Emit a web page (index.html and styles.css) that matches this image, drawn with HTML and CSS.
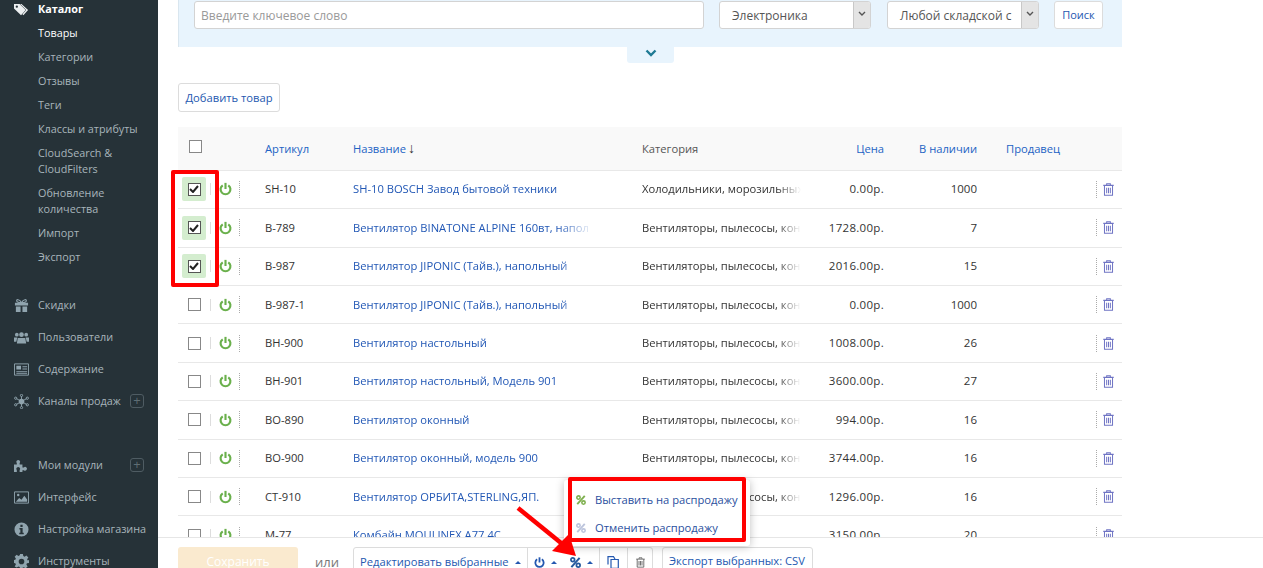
FILE: index.html
```html
<!DOCTYPE html>
<html lang="ru">
<head>
<meta charset="utf-8">
<title>Товары</title>
<link rel="stylesheet" href="styles.css">
</head>
<body>
<svg class="defs" width="0" height="0" aria-hidden="true">
  <symbol id="power" viewBox="0 0 14 14"><path d="M4 3A5.300 5.300 0 1 0 10 3" fill="none" stroke="currentColor" stroke-width="2.300"/><path d="M7 .4V7" fill="none" stroke="currentColor" stroke-width="2.300"/></symbol>
  <symbol id="trash" viewBox="0 0 12 14"><path d="M4 2V.8h4V2M.3 2.500h11.400M1.600 2.500v10.700h8.800V2.500" fill="none" stroke="currentColor" stroke-width="1.100"/><path d="M4 5v6M6 5v6M8 5v6" fill="none" stroke="currentColor" stroke-width="1.100"/></symbol>
  <symbol id="percent" viewBox="0 0 12 12"><circle cx="3" cy="3" r="2" fill="none" stroke="currentColor" stroke-width="1.900"/><circle cx="9" cy="9" r="2" fill="none" stroke="currentColor" stroke-width="1.900"/><path d="M10.500 1 1.500 11" stroke="currentColor" stroke-width="2.200"/></symbol>
</svg>
<div class="app">
  <aside class="sidebar">
    <div class="nav-head">
      <svg class="nav-icon" viewBox="0 0 16 14"><path d="M0 1h6l6.500 6.500-5 5.500L0 6z" fill="#eceff1"/><path d="M8 1l7 6.500-5 5.500-1-1 4-4.500L6.500 1z" fill="#eceff1"/><circle cx="3" cy="4" r="1.200" fill="#263238"/></svg>
      <span>Каталог</span>
    </div>
    <ul class="subnav">
      <li class="current">Товары</li>
      <li>Категории</li>
      <li>Отзывы</li>
      <li>Теги</li>
      <li>Классы и атрибуты</li>
      <li>CloudSearch &amp; CloudFilters</li>
      <li>Обновление количества</li>
      <li>Импорт</li>
      <li>Экспорт</li>
    </ul>
    <ul class="nav nav-first">
      <li><svg class="nav-icon" viewBox="0 0 16 14"><path d="M1 4h14v3H1zM2 8h5v6H2zM9 8h5v6H9z" fill="#90a4ae"/><path d="M8 4C6 0 2 0 3 2.500 3.500 4 6 4 8 4c2 0 4.500 0 5-1.500C14 0 10 0 8 4z" fill="none" stroke="#90a4ae" stroke-width="1.200"/></svg><span>Скидки</span></li>
      <li><svg class="nav-icon" viewBox="0 0 16 13"><circle cx="8" cy="3.500" r="2.500" fill="#90a4ae"/><circle cx="3" cy="3.500" r="2" fill="#90a4ae"/><circle cx="13" cy="3.500" r="2" fill="#90a4ae"/><path d="M4 7h8l1 6H3zM0 6.500h3.500L2.500 11H0zM12.500 6.500H16V11h-2.500z" fill="#90a4ae"/></svg><span>Пользователи</span></li>
      <li><svg class="nav-icon" viewBox="0 0 16 13"><path d="M.5.500h15v12H.5z" fill="none" stroke="#90a4ae"/><path d="M2.500 2.500h5v4h-5zM9 3h5v1H9zM9 5.500h5v1H9zM2.500 8h11.500v1H2.500zM2.500 10h11.500v1H2.500z" fill="#90a4ae"/></svg><span>Содержание</span></li>
      <li><svg class="nav-icon" viewBox="0 0 16 16"><circle cx="8" cy="8" r="3" fill="#90a4ae"/><path d="M8 1v14M1 4l14 8M1 12l14-8" stroke="#90a4ae"/><circle cx="8" cy="1.500" r="1.200" fill="#263238" stroke="#90a4ae"/><circle cx="8" cy="14.500" r="1.200" fill="#263238" stroke="#90a4ae"/><circle cx="1.800" cy="4.500" r="1.200" fill="#263238" stroke="#90a4ae"/><circle cx="14.200" cy="4.500" r="1.200" fill="#263238" stroke="#90a4ae"/><circle cx="1.800" cy="11.500" r="1.200" fill="#263238" stroke="#90a4ae"/><circle cx="14.200" cy="11.500" r="1.200" fill="#263238" stroke="#90a4ae"/></svg><span>Каналы продаж</span><b class="plus">+</b></li>
    </ul>
    <ul class="nav nav-second">
      <li><svg class="nav-icon" viewBox="0 0 16 14"><path d="M0 6h3V4.500a2 2 0 1 1 3 0V6h3v3h1.500a2 2 0 1 1 0 3H9v2H6v-2a2 2 0 1 0-3 0v2H0z" fill="#90a4ae"/></svg><span>Мои модули</span><b class="plus">+</b></li>
      <li><svg class="nav-icon" viewBox="0 0 16 13"><path d="M.5.500h15v12H.5z" fill="none" stroke="#90a4ae"/><path d="M2 11l3.500-4 2.500 2 3-4.500 3 4V11z" fill="#90a4ae"/><circle cx="4.500" cy="3.800" r="1.300" fill="#90a4ae"/></svg><span>Интерфейс</span></li>
      <li><svg class="nav-icon" viewBox="0 0 16 16"><path fill-rule="evenodd" d="M8 .5a7.500 7.500 0 1 0 0 15 7.500 7.500 0 0 0 0-15zM6.800 2.800h2.400v2.400H6.800zM5.800 6.500h3.400v5h1.200v1.500H5.600v-1.500h1.200V8H5.800z" fill="#90a4ae"/></svg><span>Настройка магазина</span></li>
      <li><svg class="nav-icon" viewBox="0 0 16 16"><path fill-rule="evenodd" d="M6.500 0h3l.4 2.200 1.400.6L13.200 1.500l2.100 2.100-1.300 1.900.6 1.400L16 6.500v3l-2.200.4-.6 1.400 1.300 1.900-2.100 2.100-1.900-1.300-1.400.6L9.500 16h-3l-.4-2.200-1.400-.6-1.900 1.300L.7 13.200l1.300-1.900-.6-1.400L0 9.500v-3l1.400-.4.6-1.400L.7 2.800 2.800.7l1.900 1.300 1.400-.6zM8 5a3 3 0 1 0 0 6 3 3 0 0 0 0-6z" fill="#90a4ae"/></svg><span>Инструменты</span></li>
    </ul>
  </aside>

  <main class="content">
    <form class="search-panel">
      <div class="field field-text">Введите ключевое слово</div>
      <div class="field field-select"><span class="select-value">Электроника</span><span class="select-arrow"><svg viewBox="0 0 8 6" width="8" height="6"><path d="M1 1l3 3 3-3" fill="none" stroke="#555" stroke-width="1.400"/></svg></span></div>
      <div class="field field-select"><span class="select-value">Любой складской с</span><span class="select-arrow"><svg viewBox="0 0 8 6" width="8" height="6"><path d="M1 1l3 3 3-3" fill="none" stroke="#555" stroke-width="1.400"/></svg></span></div>
      <div class="btn btn-search">Поиск</div>
    </form>
    <div class="panel-toggle"><svg viewBox="0 0 12 8" width="12" height="8"><path d="M1.500 1.500 6 6l4.500-4.500" fill="none" stroke="#1f7a94" stroke-width="2.400"/></svg></div>
    <div class="btn btn-add">Добавить товар</div>

    <table class="products">
      <colgroup>
        <col class="c-check"><col class="c-sku"><col class="c-name"><col class="c-cat"><col class="c-price"><col class="c-stock"><col class="c-seller"><col class="c-act">
      </colgroup>
      <thead>
        <tr>
          <th><span class="box"></span></th>
          <th>Артикул</th>
          <th>Название <span class="sort">↓</span></th>
          <th class="muted">Категория</th>
          <th class="num">Цена</th>
          <th class="num">В наличии</th>
          <th class="seller">Продавец</th>
          <th></th>
        </tr>
      </thead>
      <tbody>
        <tr><td><div class="ctl"><span class="pick"><span class="box on"><svg viewBox="0 0 10 8" width="10" height="8"><path d="M1 4l3 3 5-6" fill="none" stroke="#222" stroke-width="2"/></svg></span></span><i class="bar"></i><svg class="pw"><use href="#power"/></svg><i class="dots"></i></div></td><td>SH-10</td><td><a class="clip clip-name">SH-10 BOSCH Завод бытовой техники</a></td><td><span class="clip clip-cat">Холодильники, морозильных</span></td><td class="num">0.00р.</td><td class="num">1000</td><td></td><td><div class="act"><i class="dots"></i><svg class="tr"><use href="#trash"/></svg></div></td></tr>
        <tr><td><div class="ctl"><span class="pick"><span class="box on"><svg viewBox="0 0 10 8" width="10" height="8"><path d="M1 4l3 3 5-6" fill="none" stroke="#222" stroke-width="2"/></svg></span></span><i class="bar"></i><svg class="pw"><use href="#power"/></svg><i class="dots"></i></div></td><td>B-789</td><td><a class="clip clip-name">Вентилятор BINATONE ALPINE 160вт, напол</a></td><td><span class="clip clip-cat">Вентиляторы, пылесосы, кон</span></td><td class="num">1728.00р.</td><td class="num">7</td><td></td><td><div class="act"><i class="dots"></i><svg class="tr"><use href="#trash"/></svg></div></td></tr>
        <tr><td><div class="ctl"><span class="pick"><span class="box on"><svg viewBox="0 0 10 8" width="10" height="8"><path d="M1 4l3 3 5-6" fill="none" stroke="#222" stroke-width="2"/></svg></span></span><i class="bar"></i><svg class="pw"><use href="#power"/></svg><i class="dots"></i></div></td><td>B-987</td><td><a class="clip clip-name">Вентилятор JIPONIC (Тайв.), напольный</a></td><td><span class="clip clip-cat">Вентиляторы, пылесосы, кон</span></td><td class="num">2016.00р.</td><td class="num">15</td><td></td><td><div class="act"><i class="dots"></i><svg class="tr"><use href="#trash"/></svg></div></td></tr>
        <tr><td><div class="ctl"><span class="pick"><span class="box"></span></span><i class="bar"></i><svg class="pw"><use href="#power"/></svg><i class="dots"></i></div></td><td>B-987-1</td><td><a class="clip clip-name">Вентилятор JIPONIC (Тайв.), напольный</a></td><td><span class="clip clip-cat">Вентиляторы, пылесосы, кон</span></td><td class="num">0.00р.</td><td class="num">1000</td><td></td><td><div class="act"><i class="dots"></i><svg class="tr"><use href="#trash"/></svg></div></td></tr>
        <tr><td><div class="ctl"><span class="pick"><span class="box"></span></span><i class="bar"></i><svg class="pw"><use href="#power"/></svg><i class="dots"></i></div></td><td>BH-900</td><td><a class="clip clip-name">Вентилятор настольный</a></td><td><span class="clip clip-cat">Вентиляторы, пылесосы, кон</span></td><td class="num">1008.00р.</td><td class="num">26</td><td></td><td><div class="act"><i class="dots"></i><svg class="tr"><use href="#trash"/></svg></div></td></tr>
        <tr><td><div class="ctl"><span class="pick"><span class="box"></span></span><i class="bar"></i><svg class="pw"><use href="#power"/></svg><i class="dots"></i></div></td><td>BH-901</td><td><a class="clip clip-name">Вентилятор настольный, Модель 901</a></td><td><span class="clip clip-cat">Вентиляторы, пылесосы, кон</span></td><td class="num">3600.00р.</td><td class="num">27</td><td></td><td><div class="act"><i class="dots"></i><svg class="tr"><use href="#trash"/></svg></div></td></tr>
        <tr><td><div class="ctl"><span class="pick"><span class="box"></span></span><i class="bar"></i><svg class="pw"><use href="#power"/></svg><i class="dots"></i></div></td><td>BO-890</td><td><a class="clip clip-name">Вентилятор оконный</a></td><td><span class="clip clip-cat">Вентиляторы, пылесосы, кон</span></td><td class="num">994.00р.</td><td class="num">16</td><td></td><td><div class="act"><i class="dots"></i><svg class="tr"><use href="#trash"/></svg></div></td></tr>
        <tr><td><div class="ctl"><span class="pick"><span class="box"></span></span><i class="bar"></i><svg class="pw"><use href="#power"/></svg><i class="dots"></i></div></td><td>BO-900</td><td><a class="clip clip-name">Вентилятор оконный, модель 900</a></td><td><span class="clip clip-cat">Вентиляторы, пылесосы, кон</span></td><td class="num">3744.00р.</td><td class="num">16</td><td></td><td><div class="act"><i class="dots"></i><svg class="tr"><use href="#trash"/></svg></div></td></tr>
        <tr><td><div class="ctl"><span class="pick"><span class="box"></span></span><i class="bar"></i><svg class="pw"><use href="#power"/></svg><i class="dots"></i></div></td><td>CT-910</td><td><a class="clip clip-name">Вентилятор ОРБИТА,STERLING,ЯП.</a></td><td><span class="clip clip-cat">Вентиляторы, пылесосы, кон</span></td><td class="num">1296.00р.</td><td class="num">16</td><td></td><td><div class="act"><i class="dots"></i><svg class="tr"><use href="#trash"/></svg></div></td></tr>
        <tr><td><div class="ctl"><span class="pick"><span class="box"></span></span><i class="bar"></i><svg class="pw"><use href="#power"/></svg><i class="dots"></i></div></td><td>M-77</td><td><a class="clip clip-name">Комбайн MOULINEX A77 4C</a></td><td><span class="clip clip-cat">Кухонные приборы</span></td><td class="num">3150.00р.</td><td class="num">20</td><td></td><td><div class="act"><i class="dots"></i><svg class="tr"><use href="#trash"/></svg></div></td></tr>
      </tbody>
    </table>
  </main>

  <footer class="actionbar">
    <div class="btn-save">Сохранить</div>
    <span class="or">или</span>
    <div class="group">
      <div class="seg seg-edit">Редактировать выбранные<i class="caret"></i></div>
      <div class="seg seg-power"><svg class="seg-icon"><use href="#power"/></svg><i class="caret"></i></div>
      <div class="seg seg-percent"><svg class="seg-icon"><use href="#percent"/></svg><i class="caret"></i></div>
      <div class="seg seg-copy"><svg class="seg-icon seg-copy-icon" viewBox="0 0 12 13"><path d="M4 3.500h7.300V12.400H4zM1 8.500V.7h5.500L8 3" fill="none" stroke="currentColor" stroke-width="1.200"/></svg></div>
      <div class="seg seg-trash"><svg class="seg-icon seg-trash-icon"><use href="#trash"/></svg></div>
    </div>
    <div class="seg-export">Экспорт выбранных: CSV</div>
  </footer>

  <div class="menu">
    <div class="menu-item"><svg class="menu-icon green"><use href="#percent"/></svg>Выставить на распродажу</div>
    <div class="menu-item"><svg class="menu-icon pale"><use href="#percent"/></svg>Отменить распродажу</div>
  </div>

  <div class="mark mark-rows"></div>
  <div class="mark mark-menu"></div>
  <svg class="arrow" viewBox="0 0 70 60" width="70" height="60"><path d="M2 2 50 41" stroke="#f00" stroke-width="4.500" fill="none"/><path d="M60 50 36 45 53 28z" fill="#f00"/></svg>
</div>
</body>
</html>
```
FILE: styles.css
```css
* { box-sizing: border-box; }
html, body { margin: 0; padding: 0; height: 100%; overflow: hidden; background: #fff; }
body { font: 11.2px/16px "Open Sans", "Noto Sans", sans-serif; color: #333; }
.defs { position: absolute; }
.app { display: flex; width: 1263px; height: 568px; position: relative; overflow: hidden; }

.sidebar { flex: 0 0 158px; background: #263238; color: #a8b5bb; height: 568px; overflow: hidden; padding-top: 1px; font-size: 10.8px; }
.sidebar ul { list-style: none; margin: 0; padding: 0; }
.nav-head { display: flex; align-items: center; height: 16px; color: #fff; font-weight: 700; padding-left: 14px; }
.nav-icon { width: 15px; height: 15px; flex: none; margin-right: 9px; }
.subnav { padding: 8px 0 0 38px !important; }
.subnav li { padding: 0 10px 8px 0; }
.subnav .current { color: #fff; }
.nav li { display: flex; align-items: center; height: 32px; padding-left: 14px; white-space: nowrap; }
.nav-first { margin-top: 16px !important; }
.nav-second { margin-top: 32px !important; }
.plus { width: 14px; height: 14px; border: 1px solid #4f5c63; border-radius: 3px; margin-left: auto; margin-right: 14px; color: #5f6d74; font: 400 13px/11px "Open Sans", sans-serif; text-align: center; }

.content { flex: 1; padding: 0 141px 0 20px; min-width: 0; }
.search-panel { display: flex; height: 47px; background: #e8f4fd; border-left: 1px solid #d9e6ef; padding: 1px 19px 0 15px; align-items: flex-start; }
.field { height: 28px; background: #fff; border: 1px solid #d3d3d3; border-radius: 3px; }
.field-text { width: 510px; padding: 0 6px; line-height: 28px; color: #999; margin-right: 15px; font-size: 12px; }
.field-select { width: 152px; display: flex; margin-right: 16px; color: #555; font-size: 12px; line-height: 28px; overflow: hidden; }
.select-value { flex: 1; padding-left: 12px; white-space: nowrap; overflow: hidden; }
.select-arrow { flex: 0 0 17px; background: #e4e4e4; border-left: 1px solid #c8c8c8; display: flex; align-items: flex-start; justify-content: center; padding-top: 9px; }
.btn { background: #fff; border: 1px solid #dcdcdc; border-radius: 3px; color: #2458b0; text-align: center; }
.btn-search { width: 49px; height: 28px; line-height: 26px; margin-left: -1px; font-size: 11px; }
.panel-toggle { width: 47px; height: 16px; margin-left: 449px; background: #e8f4fd; border-radius: 0 0 3px 3px; display: flex; justify-content: center; padding-top: 2px; }
.btn-add { width: 102px; height: 29px; line-height: 27px; margin: 20px 0 15.300px 0; }

.products { width: 944px; border-collapse: collapse; table-layout: fixed; }
.c-check { width: 87px; } .c-sku { width: 88px; } .c-name { width: 289px; } .c-cat { width: 162px; }
.c-price { width: 80px; } .c-stock { width: 93px; } .c-seller { width: 113px; } .c-act { width: 32px; }
.products th { height: 43px; background: #f9f9f9; border-bottom: 1px solid #e8e8e8; font-weight: 400; text-align: left; color: #2263c4; padding: 0; }
.products th.muted { color: #555; }
.products th:first-child { padding-left: 11px; padding-bottom: 6px; }
.products th.num { text-align: right; }
.products th.seller { padding-left: 29px; }
.sort { font-size: 14px; color: #333; margin-left: -1px; }
.products td { height: 38.400px; padding: 0; border-bottom: 1px solid #e8e8e8; white-space: nowrap; overflow: hidden; color: #333; }
.products td.num { text-align: right; font-size: 11.500px; }
.products td:nth-child(5) { letter-spacing: .3px; }
.box { display: inline-block; width: 13px; height: 13px; border: 1px solid #888; background: #fff; vertical-align: middle; position: relative; }
.box.on { border-color: #555; display: inline-flex; align-items: center; justify-content: center; }
.ctl { display: flex; align-items: center; height: 24px; }
.pick { width: 24px; height: 24px; margin-left: 4px; margin-right: 4px; display: flex; align-items: center; justify-content: center; background: transparent; }
tr:has(.on) .pick { background: #d4edcf; border-radius: 2px; }
.pick .box { margin: 0; }
.bar { width: 1px; height: 12px; background: #ddd; margin-right: 8px; }
.pw { width: 13px; height: 14px; color: #6ab04c; margin-right: 7px; }
.dots { width: 0; height: 17px; border-left: 1px dotted #aaa; }
.clip { display: block; overflow: hidden; white-space: nowrap; -webkit-mask-image: linear-gradient(90deg, #000 85%, transparent); mask-image: linear-gradient(90deg, #000 85%, transparent); }
.clip-name { width: 240px; color: #2157b5; }
.clip-cat { width: 159px; }
.act { display: flex; align-items: center; justify-content: flex-start; padding-left: 6px; }
.tr { width: 11px; height: 13px; color: #6f74c4; margin-left: 6px; }

.actionbar { position: absolute; left: 158px; right: 0; top: 537px; height: 31px; background: #fff; border-top: 1px solid #e6e6e6; display: flex; align-items: flex-start; padding: 9px 0 0 20px; }
.btn-save { width: 120px; height: 30px; background: #faeacf; border-radius: 3px; color: #fff; text-align: center; line-height: 30px; font-size: 12px; }
.or { margin: 7px 0 0 17px; width: 38px; color: #777; font-size: 13px; }
.group { display: flex; width: 300px; height: 30px; border: 1px solid #dcdcdc; border-radius: 3px 3px 0 0; color: #2458b0; }
.seg { display: flex; align-items: center; height: 28px; border-left: 1px solid #dcdcdc; }
.seg:first-child { border-left: 0; }
.seg-edit { width: 173px; padding-left: 6px; }
.seg-power { width: 33px; padding-left: 6px; }
.seg-percent { width: 39px; padding-left: 10px; border-left: 0; color: #26599e; }
.seg-copy { width: 28px; padding-left: 7px; }
.seg-trash { width: 25px; padding-left: 8px; color: #555; }
.seg-icon { width: 11px; height: 11px; }
.seg-copy-icon { width: 12px; height: 13px; }
.seg-trash-icon { width: 9px; height: 11px; }
.caret { width: 0; height: 0; border: 3px solid transparent; border-bottom-color: #2458b0; border-top: 0; margin-left: 6px; }
.seg-export { margin-left: 9px; width: 151px; height: 30px; border: 1px solid #dcdcdc; border-radius: 3px 3px 0 0; color: #2458b0; padding: 5px 0 0 6px; white-space: nowrap; }

.menu { position: absolute; left: 564px; top: 480px; width: 186px; height: 66px; background: #fff; border-radius: 3px; box-shadow: 0 1px 8px rgba(0,0,0,.25); padding: 6px 0 0 12px; color: #2a4f9e; }
.menu-item { display: flex; align-items: center; height: 28px; white-space: nowrap; }
.menu-icon { width: 10px; height: 10px; margin-right: 9px; }
.green { color: #7fb04f; }
.pale { color: #bcc4dc; }
.mark { position: absolute; border: 4px solid #f00; border-radius: 2px; }
.mark-rows { left: 171px; top: 170px; width: 48px; height: 117px; }
.mark-menu { left: 568px; top: 477px; width: 178px; height: 65px; }
.arrow { position: absolute; left: 516px; top: 506px; }
```
